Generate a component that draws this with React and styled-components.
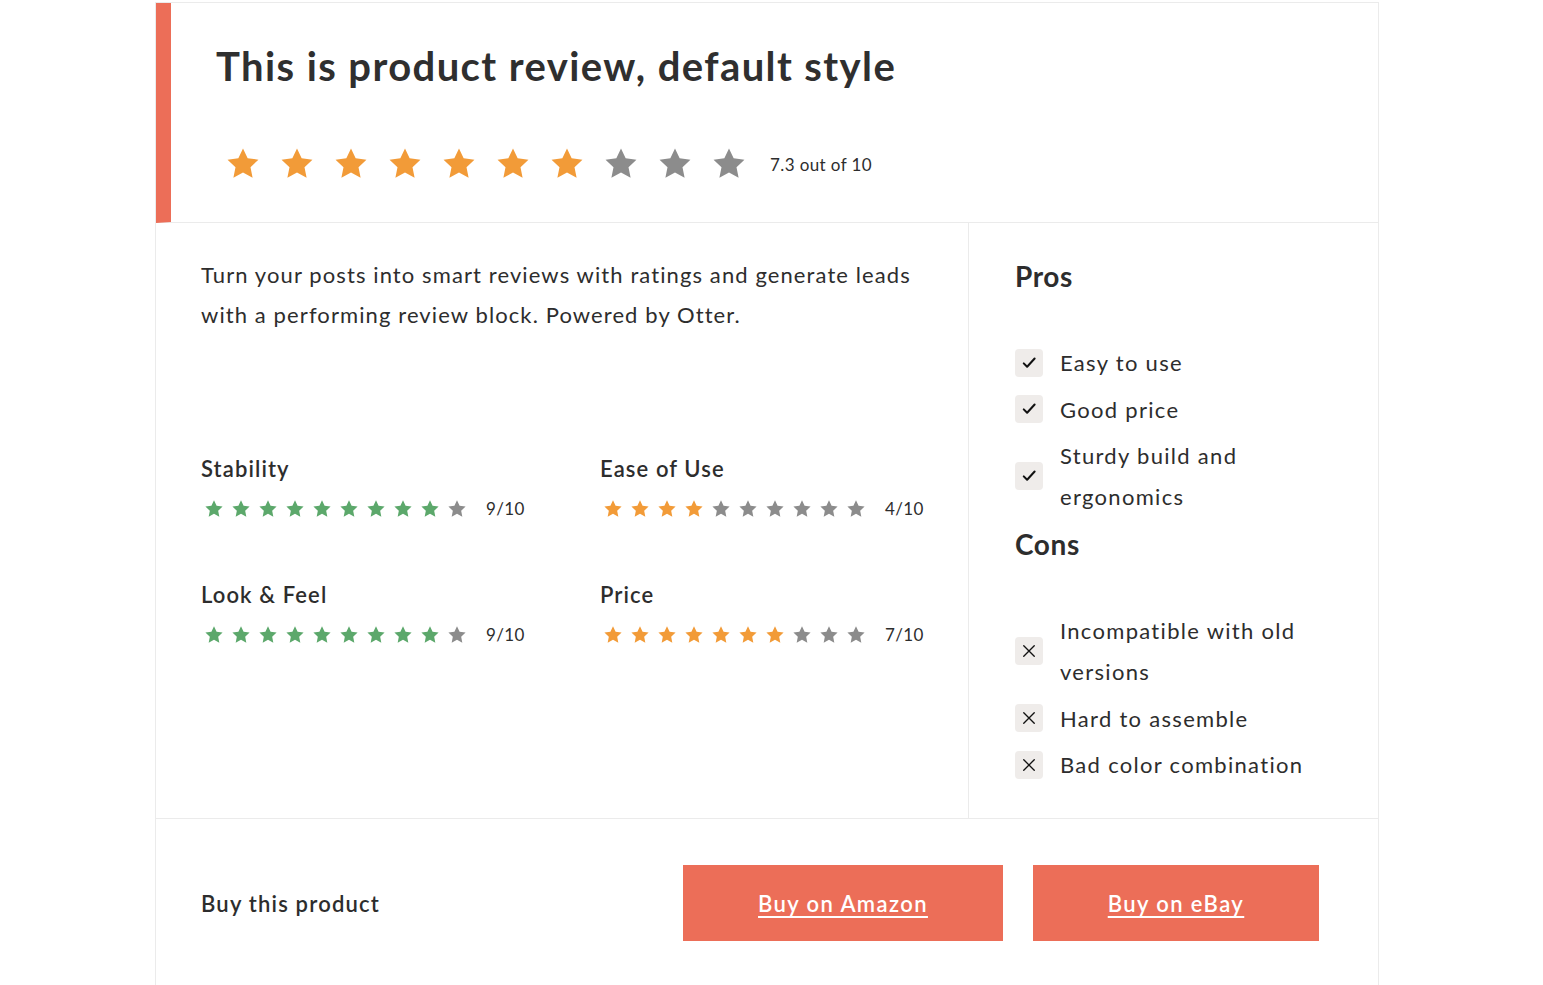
import React from "react";
import styled, { createGlobalStyle } from "styled-components";

const GlobalStyle = createGlobalStyle`
  body {
    margin: 0;
    background: #fff;
    font-family: "Lato", "Noto Sans", sans-serif;
    color: #2d2d2d;
  }
`;

const Page = styled.div`
  padding: 2px 0 0 155px;
`;

const Card = styled.div`
  width: 1222px;
  border: 1px solid #ebebeb;
  border-bottom: none;
`;

const Header = styled.div`
  border-left: 15px solid #ec6e58;
  border-bottom: 1px solid #ebebeb;
  padding: 39px 45px 40px;
`;

const Title = styled.h1`
  margin: 0;
  font-size: 40px;
  line-height: 48px;
  font-weight: 700;
  letter-spacing: 1.4px;
  color: #2f2f2f;
`;

const StarRow = styled.div`
  display: flex;
  align-items: center;
  gap: ${(p) => p.gap}px;
  margin: ${(p) => p.margin || 0};
`;

const Score = styled.span`
  font-size: ${(p) => p.size}px;
  margin-left: ${(p) => p.offset}px;
  letter-spacing: 0.4px;
  color: #2d2d2d;
`;

const Body = styled.div`
  display: grid;
  grid-template-columns: 813px 1fr;
  border-bottom: 1px solid #ebebeb;
`;

const Main = styled.div`
  border-right: 1px solid #ebebeb;
  padding: 32px 40px 40px 45px;
`;

const Description = styled.p`
  margin: 0;
  font-size: 22px;
  line-height: 40px;
  letter-spacing: 1.1px;
  color: #2d2d2d;
`;

const Ratings = styled.div`
  display: grid;
  grid-template-columns: 399px 1fr;
  row-gap: 61px;
  margin-top: 119px;
`;

const Label = styled.div`
  font-size: 22px;
  line-height: 30px;
  font-weight: 600;
  letter-spacing: 1.1px;
  color: #2d2d2d;
  margin-bottom: 14px;
`;

const Side = styled.div`
  padding: 38px 40px 33px 46px;
`;

const Heading = styled.h3`
  margin: 0 0 51px;
  font-size: 28px;
  line-height: 30px;
  font-weight: 700;
  letter-spacing: 0.6px;
  color: #2d2d2d;
`;

const List = styled.ul`
  list-style: none;
  margin: 0 0 ${(p) => (p.last ? 0 : 12)}px;
  padding: 0;
  display: flex;
  flex-direction: column;
  gap: 5.5px;
`;

const Item = styled.li`
  display: flex;
  align-items: center;
  gap: 17px;
  font-size: 22px;
  line-height: 41px;
  letter-spacing: 1.3px;
  color: #2d2d2d;
`;

const Box = styled.span`
  flex: none;
  width: 28px;
  height: 28px;
  border-radius: 4px;
  background: #efecea;
  display: flex;
  align-items: center;
  justify-content: center;
`;

const Footer = styled.div`
  display: flex;
  align-items: center;
  padding: 46px 59px 46px 45px;
`;

const BuyLabel = styled.div`
  flex: 1;
  font-size: 22px;
  font-weight: 600;
  letter-spacing: 1.2px;
  color: #2d2d2d;
`;

const Button = styled.a`
  display: flex;
  align-items: center;
  justify-content: center;
  width: ${(p) => p.width}px;
  height: 76px;
  margin-left: 30px;
  background: #ec6e58;
  color: #fff;
  font-size: 22px;
  font-weight: 600;
  letter-spacing: 1.4px;
  text-decoration: underline;
  text-underline-offset: 4px;
  text-decoration-thickness: 2px;
`;

const STAR =
  "M12 1.6l3.1 6.6 7.2.9-5.3 5 1.4 7.1L12 17.7l-6.4 3.5 1.4-7.1-5.3-5 7.2-.9z";

const Star = ({ size, color }) => (
  <svg width={size} height={size} viewBox="0 0 24 24">
    <path d={STAR} fill={color} />
  </svg>
);

const Stars = ({ value, size, on }) => (
  <>
    {Array.from({ length: 10 }, (_, i) => (
      <Star key={i} size={size} color={i < value ? on : "#8c8c8c"} />
    ))}
  </>
);

const Check = () => (
  <svg width="18" height="18" viewBox="0 0 24 24" fill="none" stroke="#111" strokeWidth="2.7" strokeLinecap="round" strokeLinejoin="round">
    <path d="M5 12.5l4.5 4.5L19.5 6" />
  </svg>
);

const Cross = () => (
  <svg width="18" height="18" viewBox="0 0 24 24" fill="none" stroke="#111" strokeWidth="1.8" strokeLinecap="round">
    <path d="M5 5l14 14M19 5L5 19" />
  </svg>
);

const ratings = [
  { label: "Stability", value: 9, color: "#5ca86b" },
  { label: "Ease of Use", value: 4, color: "#f29b38" },
  { label: "Look & Feel", value: 9, color: "#5ca86b" },
  { label: "Price", value: 7, color: "#f29b38" },
];

const pros = ["Easy to use", "Good price", "Sturdy build and ergonomics"];
const cons = ["Incompatible with old versions", "Hard to assemble", "Bad color combination"];

const App = () => (
  <Page>
    <GlobalStyle />
    <Card>
      <Header>
        <Title>This is product review, default style</Title>
        <StarRow gap={18} margin="56px 0 0 9px">
          <Stars value={7} size={36} on="#f29b38" />
          <Score size={17} offset={5}>7.3 out of 10</Score>
        </StarRow>
      </Header>
      <Body>
        <Main>
          <Description>
            Turn your posts into smart reviews with ratings and generate leads with a
            performing review block. Powered by Otter.
          </Description>
          <Ratings>
            {ratings.map((r) => (
              <div key={r.label}>
                <Label>{r.label}</Label>
                <StarRow gap={7} margin="0 0 0 3px">
                  <Stars value={r.value} size={20} on={r.color} />
                  <Score size={17} offset={12}>{r.value}/10</Score>
                </StarRow>
              </div>
            ))}
          </Ratings>
        </Main>
        <Side>
          <Heading>Pros</Heading>
          <List>
            {pros.map((p) => (
              <Item key={p}>
                <Box><Check /></Box>
                <span>{p}</span>
              </Item>
            ))}
          </List>
          <Heading>Cons</Heading>
          <List last>
            {cons.map((c) => (
              <Item key={c}>
                <Box><Cross /></Box>
                <span>{c}</span>
              </Item>
            ))}
          </List>
        </Side>
      </Body>
      <Footer>
        <BuyLabel>Buy this product</BuyLabel>
        <Button width={320} href="#">Buy on Amazon</Button>
        <Button width={286} href="#">Buy on eBay</Button>
      </Footer>
    </Card>
  </Page>
);

export default App;
